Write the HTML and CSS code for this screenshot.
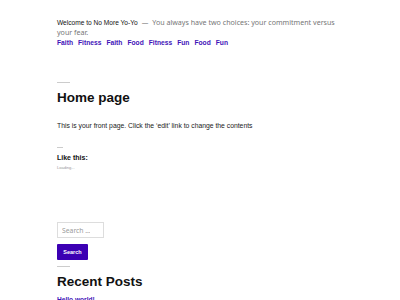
FILE: index.html
```html
<!DOCTYPE html>
<html lang="en">
<head>
<meta charset="utf-8">
<title>No More Yo-Yo</title>
<link rel="stylesheet" href="styles.css">
</head>
<body>
<div class="page">
  <header class="site-header">
    <p class="branding"><span class="site-title">Welcome to No More Yo-Yo</span><span class="dash">—</span><span class="tagline">You always have two choices: your commitment versus your fear.</span></p>
    <nav class="main-nav">
      <a href="#">Faith</a><a href="#">Fitness</a><a href="#">Faith</a><a href="#">Food</a><a href="#">Fitness</a><a href="#">Fun</a><a href="#">Food</a><a href="#">Fun</a>
    </nav>
  </header>
  <main class="content">
    <hr class="rule">
    <h1 class="entry-title">Home page</h1>
    <p class="entry-text">This is your front page. Click the ‘edit’ link to change the contents</p>
    <hr class="rule small">
    <h3 class="like-title">Like this:</h3>
    <p class="loading">Loading...</p>
  </main>
  <aside class="widgets">
    <form class="search-form">
      <input class="search-field" type="search" placeholder="Search …">
      <button class="search-submit" type="button">Search</button>
    </form>
    <hr class="rule">
    <h2 class="widget-title">Recent Posts</h2>
    <a class="recent-link" href="#">Hello world!</a>
  </aside>
</div>
</body>
</html>
```
FILE: styles.css
```css
html, body {
  margin: 0;
  padding: 0;
  background: #ffffff;
}
.page {
  padding: 18px 0 0 57px;
  width: 290px;
  font-family: "Liberation Sans", Arial, sans-serif;
  color: #111111;
}
.branding {
  margin: 0;
  font-size: 6.6px;
  line-height: 8.7px;
}
.branding span {
  line-height: 8.7px;
}
.site-title {
  color: #111111;
}
.dash {
  color: #767676;
  font-family: "Noto Sans", sans-serif;
  margin: 0 4px;
}
.tagline {
  color: #767676;
  font-family: "Noto Sans", sans-serif;
  font-size: 7.1px;
}
.main-nav {
  display: flex;
  gap: 5px;
  margin-top: 1px;
  font-size: 6.7px;
  line-height: 9px;
  font-weight: 700;
}
.main-nav a {
  color: #3f13b8;
  text-decoration: none;
}
.rule {
  border: 0;
  height: 1px;
  background: #cccccc;
  width: 13px;
  margin: 0;
}
.content .rule:first-child {
  margin-top: 35px;
}
.entry-title {
  margin: 7px 0 0;
  font-size: 13.5px;
  line-height: 16px;
  font-weight: 700;
}
.entry-text {
  margin: 15px 0 0;
  font-size: 6.8px;
  line-height: 10px;
  color: #222222;
}
.rule.small {
  width: 6px;
  margin-top: 16px;
}
.like-title {
  margin: 5px 0 0;
  font-size: 7px;
  line-height: 9px;
  font-weight: 700;
}
.loading {
  margin: 3px 0 0;
  font-size: 4px;
  line-height: 6px;
  color: #999999;
}
.widgets {
  margin-top: 51px;
}
.search-form {
  display: flex;
  flex-direction: column;
  align-items: flex-start;
  gap: 6px;
}
.search-field {
  box-sizing: border-box;
  width: 47px;
  height: 16px;
  margin: 0;
  padding: 0 4px;
  border: 1px solid #dddddd;
  border-radius: 0;
  font-family: "Noto Sans", sans-serif;
  font-size: 6.8px;
  color: #333333;
  outline: none;
}
.search-field::placeholder {
  color: #9a9a9a;
}
.search-submit {
  box-sizing: border-box;
  width: 31px;
  height: 16px;
  margin: 0;
  padding: 0;
  border: 0;
  border-radius: 1px;
  background: #3c00b3;
  color: #ffffff;
  font-family: "Liberation Sans", Arial, sans-serif;
  font-size: 5.5px;
  font-weight: 700;
}
.widgets .rule {
  margin-top: 6px;
}
.widget-title {
  margin: 7px 0 0;
  font-size: 13.5px;
  line-height: 16px;
  font-weight: 700;
}
.recent-link {
  display: block;
  margin-top: 5px;
  font-size: 6.6px;
  line-height: 9px;
  font-weight: 700;
  color: #3f13b8;
  text-decoration: none;
}
```
